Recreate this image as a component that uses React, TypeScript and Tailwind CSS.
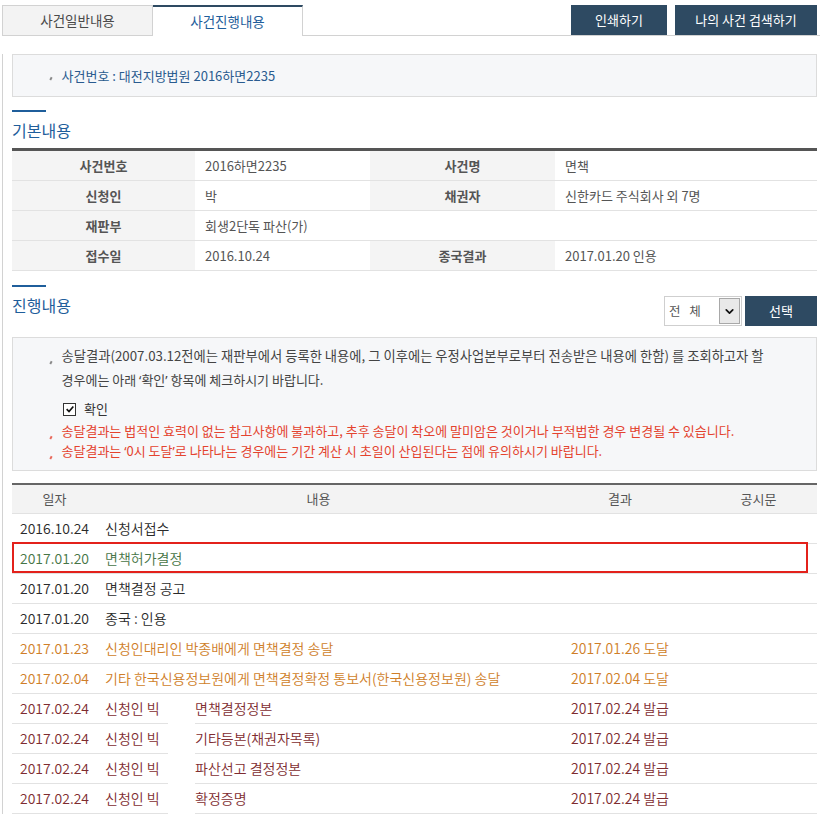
import React from 'react';
import { ChevronDown } from 'lucide-react';

type Tone = 'plain' | 'green' | 'orange' | 'maroon';

interface ProgressRow {
  date: string;
  applicant?: string;
  content: string;
  result?: string;
  tone: Tone;
  marked?: boolean;
}

const toneText: Record<Tone, string> = {
  plain: 'text-[#2a2a2a]',
  green: 'text-[#467546]',
  orange: 'text-[#cf7e28]',
  maroon: 'text-[#7e2c30]',
};

const basicInfo = [
  { label: '사건번호', value: '2016하면2235', label2: '사건명', value2: '면책' },
  { label: '신청인', value: '박', label2: '채권자', value2: '신한카드 주식회사 외 7명' },
  { label: '재판부', value: '회생2단독 파산(가)' },
  { label: '접수일', value: '2016.10.24', label2: '종국결과', value2: '2017.01.20 인용' },
];

const progress: ProgressRow[] = [
  { date: '2016.10.24', content: '신청서접수', tone: 'plain' },
  { date: '2017.01.20', content: '면책허가결정', tone: 'green', marked: true },
  { date: '2017.01.20', content: '면책결정 공고', tone: 'plain' },
  { date: '2017.01.20', content: '종국 : 인용', tone: 'plain' },
  { date: '2017.01.23', content: '신청인대리인 박종배에게 면책결정 송달', result: '2017.01.26 도달', tone: 'orange' },
  { date: '2017.02.04', content: '기타 한국신용정보원에게 면책결정확정 통보서(한국신용정보원) 송달', result: '2017.02.04 도달', tone: 'orange' },
  { date: '2017.02.24', applicant: '신청인 빅', content: '면책결정정본', result: '2017.02.24 발급', tone: 'maroon' },
  { date: '2017.02.24', applicant: '신청인 빅', content: '기타등본(채권자목록)', result: '2017.02.24 발급', tone: 'maroon' },
  { date: '2017.02.24', applicant: '신청인 빅', content: '파산선고 결정정본', result: '2017.02.24 발급', tone: 'maroon' },
  { date: '2017.02.24', applicant: '신청인 빅', content: '확정증명', result: '2017.02.24 발급', tone: 'maroon' },
];

function Bullet({ red }: { red?: boolean }) {
  return (
    <span
      className={`inline-block w-[1.5px] h-[3px] mr-[10px] translate-y-[3px] rotate-[30deg] ${red ? 'bg-[#e86a5c]' : 'bg-[#8a8a8a]'}`}
    />
  );
}

// curly quotes from a latin face so they stay narrow
function Q({ children }: { children: React.ReactNode }) {
  return <span className="font-['Noto_Sans',sans-serif]">{children}</span>;
}

function SectionTitle({ children }: { children: React.ReactNode }) {
  return (
    <div>
      <div className="w-[34px] h-[2px] bg-[#1f5e9b]" />
      <h2 className="mt-[6px] text-[16px] leading-[24px] text-[#1f5e9b]">{children}</h2>
    </div>
  );
}

export default function App() {
  return (
    <div className="w-[820px] bg-white pl-[2px] pb-[6px] font-['Noto_Sans_CJK_KR',sans-serif] text-[#444]">
      {/* tabs and actions */}
      <div className="flex h-[36px] pt-[5px]">
        <div className="w-[151px] border border-[#d2d2d2] bg-[#f3f3f3] flex items-center justify-center text-[13.5px] text-[#4a4a4a]">
          사건일반내용
        </div>
        <div className="w-[150px] border-t-2 border-t-[#2e4a62] border-r border-r-[#d2d2d2] bg-white flex items-center justify-center text-[13.5px] text-[#1f5e9b]">
          사건진행내용
        </div>
        <div className="flex-1 border-b border-[#d2d2d2] flex justify-end items-start gap-[8px] pr-[3px]">
          <button className="w-[96px] h-[30px] bg-[#2e4a62] text-white text-[13px]">인쇄하기</button>
          <button className="w-[142px] h-[30px] bg-[#2e4a62] text-white text-[13px]">나의 사건 검색하기</button>
        </div>
      </div>

      <div className="border-l border-[#d2d2d2] pl-[9px] pr-[3px]">
        {/* case number */}
        <div className="mt-[18px] h-[43px] border border-[#dcdcdc] bg-[#f6f7f9] pl-[37px] flex items-center text-[13px] text-[#2a5b8f]">
          <Bullet />
          사건번호 : 대전지방법원 2016하면2235
        </div>

        <div className="mt-[13px]">
          <SectionTitle>기본내용</SectionTitle>
        </div>

        {/* basic info table */}
        <div className="mt-[6px] border-t-[3px] border-[#555] text-[13px]">
          {basicInfo.map((r) => (
            <div key={r.label} className="grid grid-cols-[183px_175px_185px_1fr] h-[30px] border-b border-[#e2e2e2]">
              <div className="bg-[#f4f4f4] flex items-center justify-center font-semibold text-[#555]">{r.label}</div>
              {r.label2 ? (
                <>
                  <div className="flex items-center pl-[10px] text-[#555]">{r.value}</div>
                  <div className="bg-[#f4f4f4] flex items-center justify-center font-semibold text-[#555]">{r.label2}</div>
                  <div className="flex items-center pl-[10px] text-[#555]">{r.value2}</div>
                </>
              ) : (
                <div className="col-span-3 flex items-center pl-[10px] text-[#555]">{r.value}</div>
              )}
            </div>
          ))}
        </div>

        {/* progress header with filter */}
        <div className="mt-[14px] flex justify-between items-start">
          <SectionTitle>진행내용</SectionTitle>
          <div className="mt-[11px] flex h-[30px] gap-[3px]">
            <div className="w-[78px] border border-[#cfcfcf] bg-white flex items-stretch">
              <span className="flex-1 flex items-center pl-[4px] text-[12.5px] text-[#555] tracking-[3px]">전 체</span>
              <span className="w-[21px] my-[1px] mr-[1px] border border-[#a8a8a8] bg-[#e9e9e9] flex items-center justify-center">
                <ChevronDown className="w-[13px] h-[13px] text-[#111]" strokeWidth={3.2} />
              </span>
            </div>
            <button className="w-[72px] bg-[#2e4a62] text-white text-[13px]">선택</button>
          </div>
        </div>

        {/* notice */}
        <div className="mt-[11px] h-[134px] border border-[#dcdcdc] bg-[#f6f7f9] pl-[37px] pt-[6px] text-[13px]">
          <p className="leading-[24px] text-[#444] whitespace-nowrap text-[13.3px]">
            <Bullet />
            송달결과(2007.03.12전에는 재판부에서 등록한 내용에, 그 이후에는 우정사업본부로부터 전송받은 내용에 한함) 를 조회하고자 할
          </p>
          <p className="leading-[24px] text-[#444] pl-[11.5px]">
            경우에는 아래 <Q>‘</Q>확인<Q>’</Q> 항목에 체크하시기 바랍니다.
          </p>
          <label className="mt-[5px] h-[24px] pl-[13px] flex items-center gap-[8px] text-[#333]">
            <span className="w-[13px] h-[13px] border border-[#333] bg-white flex items-center justify-center">
              <svg viewBox="0 0 12 12" className="w-[10px] h-[10px]">
                <path d="M2 6.2 L4.8 9 L10 3" fill="none" stroke="#111" strokeWidth="2" />
              </svg>
            </span>
            확인
          </label>
          <p className="leading-[20px] text-[#e4432f] whitespace-nowrap">
            <Bullet red />
            송달결과는 법적인 효력이 없는 참고사항에 불과하고, 추후 송달이 착오에 말미암은 것이거나 부적법한 경우 변경될 수 있습니다.
          </p>
          <p className="leading-[20px] text-[#e4432f] whitespace-nowrap">
            <Bullet red />
            송달결과는 <Q>‘</Q>0시 도달<Q>’</Q>로 나타나는 경우에는 기간 계산 시 초일이 산입된다는 점에 유의하시기 바랍니다.
          </p>
        </div>

        {/* progress table */}
        <div className="mt-[12px] border-t-2 border-[#666]">
          <div className="grid grid-cols-[85px_443px_160px_1fr] h-[29px] bg-[#f3f3f3] border-b border-[#e2e2e2] text-[13px] text-[#555]">
            <div className="flex items-center justify-center">일자</div>
            <div className="flex items-center justify-center">내용</div>
            <div className="flex items-center justify-center">결과</div>
            <div className="flex items-center justify-center">공시문</div>
          </div>
          {progress.map((r, i) => {
            const tone = toneText[r.tone];
            const line = 'border-b border-[#e2e2e2]';
            return (
              <div
                key={i}
                className={`relative grid grid-cols-[85px_443px_160px_1fr] h-[30px] text-[14px] font-[350] ${tone} ${r.applicant ? '' : line}`}
              >
                <div className={`flex items-center pl-[8px] ${r.applicant ? line : ''}`}>{r.date}</div>
                {r.applicant ? (
                  <div className="flex">
                    <div className={`w-[71px] flex items-center pl-[8px] ${line}`}>{r.applicant}</div>
                    <div className={`flex-1 ml-[27px] flex items-center ${line}`}>{r.content}</div>
                  </div>
                ) : (
                  <div className="flex items-center pl-[8px] whitespace-nowrap">{r.content}</div>
                )}
                <div className={`flex items-center justify-center ${r.applicant ? line : ''}`}>{r.result}</div>
                <div className={r.applicant ? line : ''} />
                {r.marked && (
                  <div className="absolute left-0 right-[9px] top-[-2px] bottom-[0px] border-[2.5px] border-[#e3211b] pointer-events-none" />
                )}
              </div>
            );
          })}
        </div>
      </div>
    </div>
  );
}
